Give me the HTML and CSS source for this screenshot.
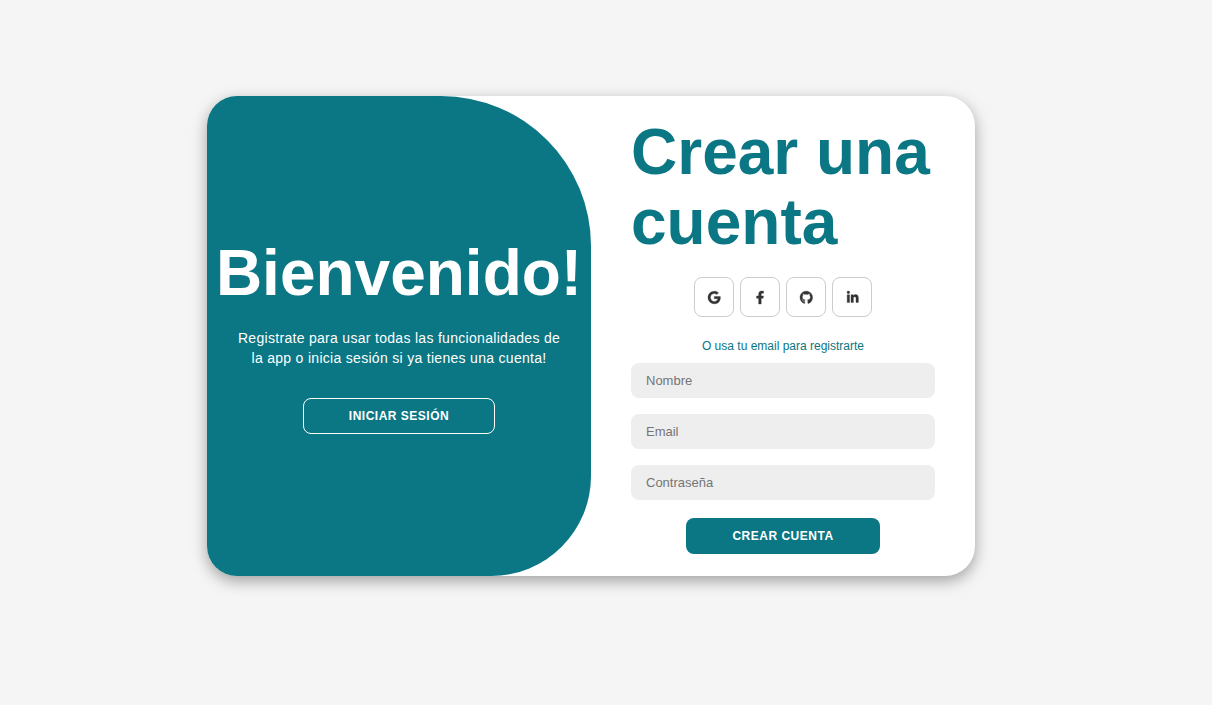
FILE: index.html
```html
<!DOCTYPE html>
<html lang="es">
<head>
<meta charset="utf-8">
<meta name="viewport" content="width=device-width, initial-scale=1">
<title>Crear una cuenta</title>
<link rel="stylesheet" href="styles.css">
</head>
<body>
<main class="card">
  <section class="welcome">
    <h1 class="title">Bienvenido!</h1>
    <p class="welcome-text">Registrate para usar todas las funcionalidades de la app o inicia sesión si ya tienes una cuenta!</p>
    <button class="button button-outline" type="button">Iniciar sesión</button>
  </section>
  <form class="signup">
    <h1 class="title signup-title">Crear una cuenta</h1>
    <div class="social">
      <a class="social-link" href="#" aria-label="Google"><svg class="icon" viewBox="0 0 488 512"><path d="M488 261.8C488 403.3 391.1 504 248 504 110.8 504 0 393.2 0 256S110.8 8 248 8c66.8 0 123 24.5 166.3 64.9l-67.5 64.9C258.5 52.6 94.3 116.6 94.3 256c0 86.5 69.1 156.6 153.7 156.6 98.2 0 135-70.4 140.8-106.9H248v-85.3h236.1c2.3 12.7 3.9 24.9 3.9 41.4z"/></svg></a>
      <a class="social-link" href="#" aria-label="Facebook"><svg class="icon" viewBox="0 0 320 512"><path d="M279.14 288l14.22-92.66h-88.91v-60.13c0-25.35 12.42-50.06 52.24-50.06h40.42V6.26S260.43 0 225.36 0c-73.22 0-121.08 44.38-121.08 124.72v70.62H22.89V288h81.39v224h100.17V288z"/></svg></a>
      <a class="social-link" href="#" aria-label="GitHub"><svg class="icon" viewBox="0 0 496 512"><path d="M244.8 8C106.1 8 0 113.3 0 252c0 110.9 69.8 205.8 169.5 239.2 12.8 2.3 17.3-5.6 17.3-12.1 0-6.2-.3-40.4-.3-61.4 0 0-70 15-84.7-29.8 0 0-11.4-29.1-27.8-36.6 0 0-22.9-15.7 1.6-15.4 0 0 24.9 2 38.6 25.8 21.9 38.6 58.6 27.5 72.9 20.9 2.3-16 8.8-27.1 16-33.7-55.9-6.2-112.3-14.3-112.3-110.5 0-27.5 7.6-41.3 23.6-58.9-2.6-6.5-11.1-33.3 2.6-67.9 20.9-6.5 69 27 69 27 20-5.6 41.5-8.5 62.8-8.5s42.8 2.9 62.8 8.5c0 0 48.1-33.6 69-27 13.7 34.7 5.2 61.4 2.6 67.9 16 17.7 25.8 31.5 25.8 58.9 0 96.5-58.9 104.2-114.8 110.5 9.2 7.9 17 22.9 17 46.4 0 33.7-.3 75.4-.3 83.6 0 6.5 4.6 14.4 17.3 12.1C428.2 457.8 496 362.9 496 252 496 113.3 383.5 8 244.8 8z"/></svg></a>
      <a class="social-link" href="#" aria-label="LinkedIn"><svg class="icon" viewBox="0 0 448 512"><path d="M100.28 448H7.4V148.9h92.88zM53.79 108.1C24.09 108.1 0 83.5 0 53.8a53.79 53.79 0 0 1 107.58 0c0 29.7-24.1 54.3-53.79 54.3zM447.9 448h-92.68V302.4c0-34.7-.7-79.2-48.29-79.2-48.29 0-55.69 37.7-55.69 76.7V448h-92.78V148.9h89.08v40.8h1.3c12.4-23.5 42.69-48.3 87.88-48.3 94 0 111.28 61.9 111.28 142.3V448z"/></svg></a>
    </div>
    <span class="hint">O usa tu email para registrarte</span>
    <div class="fields">
      <input class="field" type="text" placeholder="Nombre" aria-label="Nombre">
      <input class="field" type="email" placeholder="Email" aria-label="Email">
      <input class="field" type="password" placeholder="Contraseña" aria-label="Contraseña">
    </div>
    <button class="button" type="button">Crear cuenta</button>
  </form>
</main>
</body>
</html>
```
FILE: styles.css
```css
* {
  box-sizing: border-box;
  margin: 0;
  padding: 0;
}

body {
  min-height: 100vh;
  padding: 0 30px 33px 0;
  display: flex;
  align-items: center;
  justify-content: center;
  background: #f5f5f5;
  font-family: "Liberation Sans", Arial, sans-serif;
}

.card {
  width: 100%;
  max-width: 768px;
  min-height: 480px;
  display: grid;
  grid-template-columns: repeat(2, minmax(0, 1fr));
  overflow: hidden;
  border-radius: 30px;
  background: #fff;
  box-shadow: 0 5px 15px rgba(0, 0, 0, 0.35);
}

.welcome {
  padding: 0 30px;
  display: flex;
  flex-direction: column;
  align-items: center;
  justify-content: center;
  border-radius: 0 150px 100px 0;
  background: #0b7684;
  color: #fff;
  text-align: center;
}

.title {
  font-size: 64px;
  line-height: 70px;
  font-weight: 700;
}

.welcome-text {
  margin: 20px 0;
  font-size: 14px;
  line-height: 20px;
  letter-spacing: 0.3px;
}

.button {
  margin-top: 10px;
  padding: 0 45px;
  height: 36px;
  border: 1px solid transparent;
  border-radius: 8px;
  background: #0b7684;
  color: #fff;
  font: 600 12px "Liberation Sans", Arial, sans-serif;
  letter-spacing: 0.5px;
  text-transform: uppercase;
  cursor: pointer;
}

.button-outline {
  border-color: #fff;
  background: transparent;
}

.signup {
  padding: 0 40px 2px;
  display: flex;
  flex-direction: column;
  align-items: center;
  justify-content: center;
}

.signup-title {
  width: 100%;
  color: #0b7684;
}

.social {
  margin: 20px 0;
  display: flex;
  gap: 6px;
}

.social-link {
  width: 40px;
  height: 40px;
  padding: 1px 0 0 1px;
  display: flex;
  align-items: center;
  justify-content: center;
  border: 1px solid #ccc;
  border-radius: 8px;
  color: #333;
}

.icon {
  height: 13px;
  overflow: visible;
  fill: currentColor;
  stroke: currentColor;
  stroke-width: 14;
}

.hint {
  color: #0b7684;
  font-size: 12px;
  line-height: 18px;
}

.fields {
  width: 100%;
  margin: 8px 0;
  display: flex;
  flex-direction: column;
  gap: 16px;
}

.field {
  width: 100%;
  height: 35px;
  padding: 0 15px;
  border: none;
  border-radius: 8px;
  background: #eee;
  font: 13px "Liberation Sans", Arial, sans-serif;
}

.field::placeholder {
  color: #757575;
}
```
